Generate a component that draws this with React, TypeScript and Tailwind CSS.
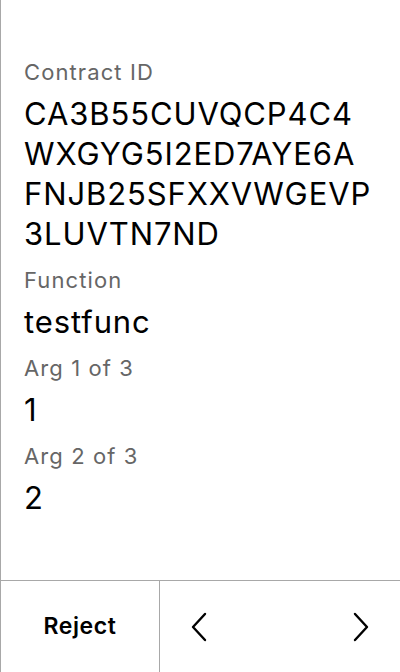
const fields = [
  { label: "Contract ID", value: "CA3B55CUVQCP4C4\nWXGYG5I2ED7AYE6A\nFNJB25SFXXVWGEVP\n3LUVTN7ND" },
  { label: "Function", value: "testfunc" },
  { label: "Arg 1 of 3", value: "1" },
  { label: "Arg 2 of 3", value: "2" },
];

function Chevron({ dir }: { dir: "left" | "right" }) {
  const points = dir === "left" ? "14,2 2,15 14,28" : "2,2 14,15 2,28";
  return (
    <svg width="16" height="30" viewBox="0 0 16 30" fill="none">
      <polyline points={points} stroke="black" strokeWidth="2.4" strokeLinecap="round" strokeLinejoin="round" />
    </svg>
  );
}

function Field({ label, value }: { label: string; value: string }) {
  return (
    <div className="flex flex-col">
      <div className="text-[22px] leading-[28px] tracking-[1.1px] text-[#666666]">{label}</div>
      <div className="mt-2 text-[31px] leading-[40px] tracking-[0.9px] text-black whitespace-pre-line">{value}</div>
    </div>
  );
}

export default function App() {
  return (
    <div
      className="flex flex-col w-[400px] h-[672px] bg-white border-l border-[#a8a8a8]"
      style={{ fontFamily: "Inter, 'Noto Sans', sans-serif" }}
    >
      <main className="flex-1 flex flex-col gap-3 pl-[23px] pt-[58px]">
        {fields.map((f) => (
          <Field key={f.label} label={f.label} value={f.value} />
        ))}
      </main>
      <footer className="h-[92px] flex border-t border-[#a8a8a8]">
        <button className="w-[159px] flex items-center justify-center border-r border-[#a8a8a8] text-[23px] font-semibold tracking-[0.6px] text-black">
          Reject
        </button>
        <div className="flex-1 flex items-center justify-between pl-[31px] pr-[31px]">
          <Chevron dir="left" />
          <Chevron dir="right" />
        </div>
      </footer>
    </div>
  );
}
